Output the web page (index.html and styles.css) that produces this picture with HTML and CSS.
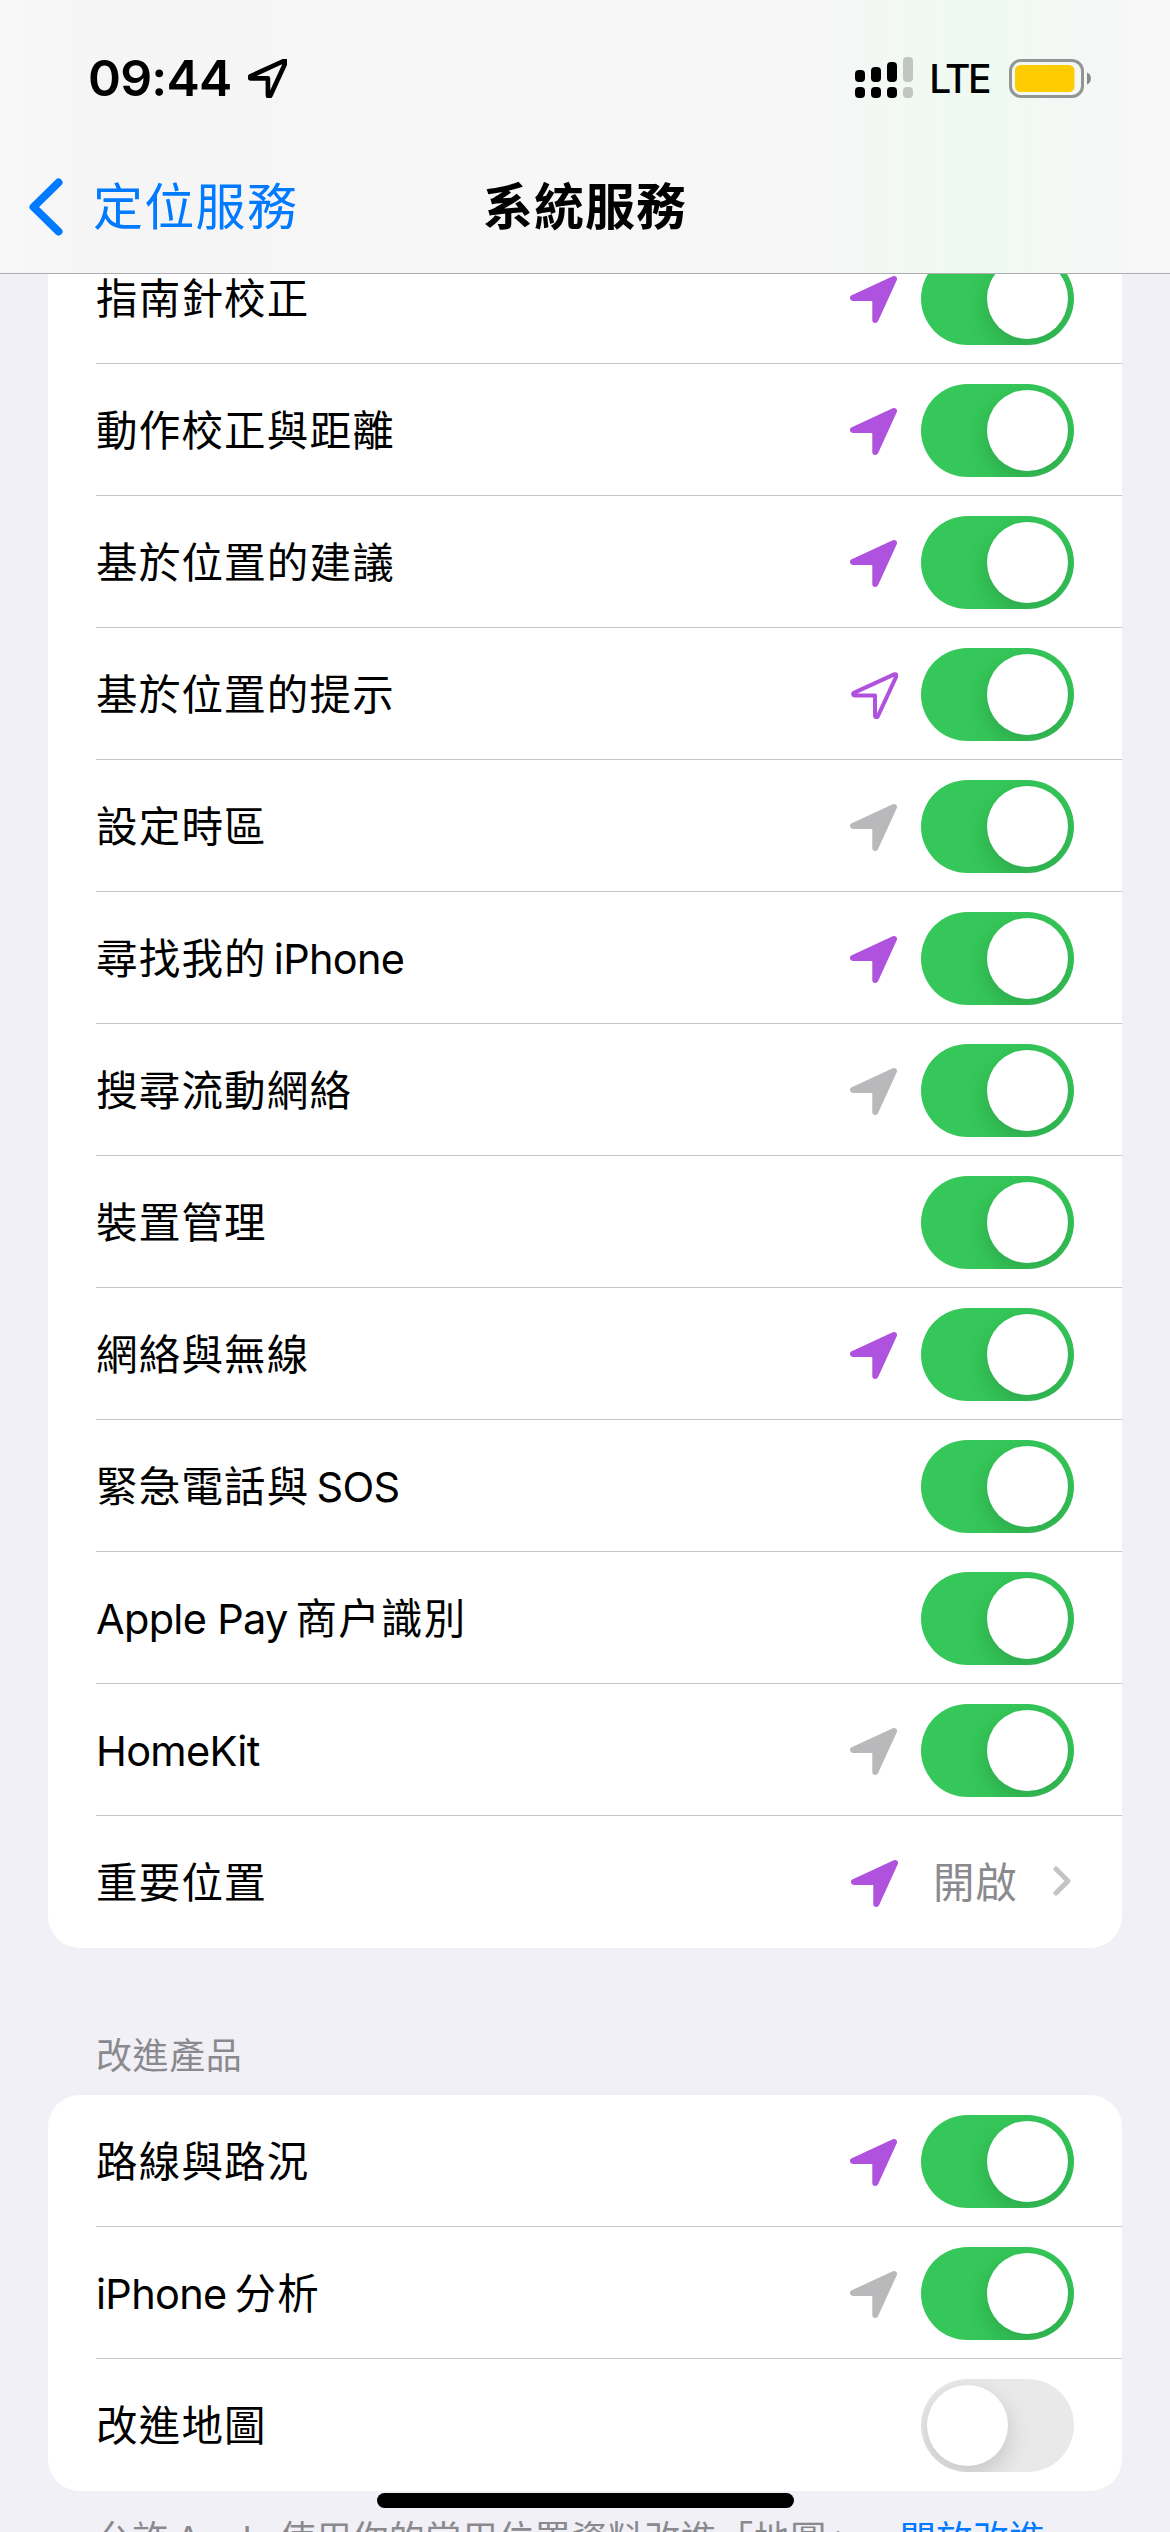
FILE: index.html
```
<!DOCTYPE html>
<html lang="zh-Hant-HK">
<head>
    <meta charset="UTF-8">
    <meta name="viewport" content="width=device-width, initial-scale=1.0">
    <title>系統服務</title>
    <link rel="stylesheet" href="styles.css">
</head>
<body>
    <!-- Shared icons -->
    <svg class="icon-defs" width="0" height="0">
        <symbol id="arrow-solid" viewBox="0 0 47 47">
            <path d="M44 3 3 22h22.3v22z" fill="currentColor" stroke="currentColor" stroke-width="6" stroke-linejoin="round" />
        </symbol>
        <symbol id="arrow-outline" viewBox="0 0 47 47">
            <path d="M43.2 2.4 3.3 20.6C1.5 21.6 2 23.4 4 23.4H24V43.5C24 45.6 26.2 45.8 27 44L45.2 4.6C46 2.8 45 1.7 43.2 2.4Z" fill="none" stroke="currentColor" stroke-linejoin="round" />
        </symbol>
    </svg>

    <header class="header">
        <div class="status-bar">
            <div class="status-left">
                <span class="time">09:44</span>
                <svg class="status-arrow"><use href="#arrow-outline" /></svg>
            </div>
            <div class="status-right">
                <svg class="signal" width="58" height="42" viewBox="0 0 58 42">
                    <rect x="0" y="13" width="10" height="12" rx="4" />
                    <rect x="16" y="10" width="10" height="15" rx="4" />
                    <rect x="32" y="5" width="10" height="20" rx="4" />
                    <rect class="dim" x="48" y="0" width="10" height="25" rx="4" />
                    <rect x="0" y="30" width="10" height="11" rx="4" />
                    <rect x="16" y="30" width="10" height="11" rx="4" />
                    <rect x="32" y="30" width="10" height="11" rx="4" />
                    <rect class="dim" x="48" y="30" width="10" height="11" rx="4" />
                </svg>
                <span class="network">LTE</span>
                <svg class="battery" width="82" height="39" viewBox="0 0 82 39">
                    <rect x="1.5" y="1.5" width="72" height="36" rx="10.5" fill="none" stroke="#919593" stroke-width="3" />
                    <rect x="6" y="6" width="59.5" height="27" rx="5.5" fill="#ffcc02" />
                    <path d="M78 13.5c5.200 1.500 5.200 10.500 0 12z" fill="#868a88" />
                </svg>
            </div>
        </div>
        <nav class="nav-bar">
            <a href="#" class="back">
                <svg width="34" height="58" viewBox="0 0 34 58">
                    <path d="M29.500 4.500 4.500 29l25 24.500" fill="none" stroke="currentColor" stroke-width="8" stroke-linecap="round" stroke-linejoin="round" />
                </svg>
                <span>定位服務</span>
            </a>
            <h1 class="nav-title">系統服務</h1>
        </nav>
    </header>

    <main class="content">
        <ul class="card card-scrolled">
            <li class="row">
                <span class="label">指南針校正</span>
                <svg class="arrow purple"><use href="#arrow-solid" /></svg>
                <span class="toggle on"></span>
            </li>
            <li class="row">
                <span class="label">動作校正與距離</span>
                <svg class="arrow purple"><use href="#arrow-solid" /></svg>
                <span class="toggle on"></span>
            </li>
            <li class="row">
                <span class="label">基於位置的建議</span>
                <svg class="arrow purple"><use href="#arrow-solid" /></svg>
                <span class="toggle on"></span>
            </li>
            <li class="row">
                <span class="label">基於位置的提示</span>
                <svg class="arrow arrow-hollow purple"><use href="#arrow-outline" /></svg>
                <span class="toggle on"></span>
            </li>
            <li class="row">
                <span class="label">設定時區</span>
                <svg class="arrow gray"><use href="#arrow-solid" /></svg>
                <span class="toggle on"></span>
            </li>
            <li class="row">
                <span class="label">尋找我的<span class="latin after">iPhone</span></span>
                <svg class="arrow purple"><use href="#arrow-solid" /></svg>
                <span class="toggle on"></span>
            </li>
            <li class="row">
                <span class="label">搜尋流動網絡</span>
                <svg class="arrow gray"><use href="#arrow-solid" /></svg>
                <span class="toggle on"></span>
            </li>
            <li class="row">
                <span class="label">裝置管理</span>
                <span class="toggle on"></span>
            </li>
            <li class="row">
                <span class="label">網絡與無線</span>
                <svg class="arrow purple"><use href="#arrow-solid" /></svg>
                <span class="toggle on"></span>
            </li>
            <li class="row">
                <span class="label">緊急電話與<span class="latin after">SOS</span></span>
                <span class="toggle on"></span>
            </li>
            <li class="row">
                <span class="label"><span class="latin before">Apple Pay</span>商户識別</span>
                <span class="toggle on"></span>
            </li>
            <li class="row">
                <span class="label"><span class="latin">HomeKit</span></span>
                <svg class="arrow gray"><use href="#arrow-solid" /></svg>
                <span class="toggle on"></span>
            </li>
            <li class="row">
                <span class="label">重要位置</span>
                <svg class="arrow purple"><use href="#arrow-solid" /></svg>
                <span class="detail">
                    <span class="value">開啟</span>
                    <svg class="chevron" width="18" height="30" viewBox="0 0 18 30">
                        <path d="M3 3l12 12L3 27" fill="none" stroke="currentColor" stroke-width="5" stroke-linecap="round" stroke-linejoin="round" />
                    </svg>
                </span>
            </li>
        </ul>

        <h2 class="section-title">改進產品</h2>
        <ul class="card">
            <li class="row">
                <span class="label">路線與路況</span>
                <svg class="arrow purple"><use href="#arrow-solid" /></svg>
                <span class="toggle on"></span>
            </li>
            <li class="row">
                <span class="label"><span class="latin before">iPhone</span>分析</span>
                <svg class="arrow gray"><use href="#arrow-solid" /></svg>
                <span class="toggle on"></span>
            </li>
            <li class="row">
                <span class="label">改進地圖</span>
                <span class="toggle"></span>
            </li>
        </ul>
        <p class="footnote">允許<span class="latin after before">Apple</span>使用你的常用位置資料改進「地圖」。<a href="#">開放改進</a></p>
    </main>

    <div class="home-indicator"></div>
</body>
</html>
```
FILE: styles.css
```
* {
    margin: 0;
    padding: 0;
    box-sizing: border-box;
}

body {
    width: 1170px;
    height: 2532px;
    display: flex;
    flex-direction: column;
    overflow: hidden;
    background: #f1f0f6;
    color: #000;
    font-family: Inter, 'Noto Sans CJK TC', sans-serif;
}

a {
    color: #007aff;
    text-decoration: none;
}

.icon-defs {
    position: absolute;
}

/* Header */
.header {
    flex: none;
    height: 274px;
    border-bottom: 1px solid #adadaf;
    background: linear-gradient(90deg, #f8f8f8 0, #f5f5f5 100px, #f7f7f7 500px, #f7f7f7 800px, #f2f8f3 900px, #eefaf1 980px, #f4f8f5 1060px, #f8f8f8 1170px);
}

.status-bar {
    display: flex;
    justify-content: space-between;
    align-items: center;
    height: 156px;
    padding: 0 79px 0 88px;
}

.status-left,
.status-right {
    display: flex;
    align-items: center;
}

.time {
    font-size: 50px;
    font-weight: 600;
    letter-spacing: -0.8px;
}

.status-arrow {
    width: 39px;
    height: 39px;
    margin-left: 16px;
    stroke-width: 5.6;
}

.signal .dim {
    fill: #c1c6c3;
}

.network {
    margin-left: 16px;
    font-size: 39px;
    font-weight: 500;
    letter-spacing: -2.5px;
}

.battery {
    margin-left: 20px;
}

.nav-bar {
    display: grid;
    grid-template-columns: 1fr auto 1fr;
    align-items: center;
    height: 102px;
    padding: 0 29px;
    line-height: 60px;
}

.back {
    display: flex;
    align-items: center;
    gap: 30px;
    font-size: 50px;
    letter-spacing: 1.3px;
}

.nav-title {
    font-size: 50px;
    font-weight: 700;
    letter-spacing: 1px;
}

/* List */
.content {
    flex: 1;
    padding: 0 48px;
    overflow: hidden;
}

.card {
    list-style: none;
    background: #fff;
    border-radius: 32px;
}

.card-scrolled {
    margin-top: -42px;
}

.row {
    display: flex;
    align-items: center;
    height: 132px;
    padding: 1px 48px 0 0;
    margin-left: 48px;
    border-bottom: 1px solid #c6c6c8;
}

.row:last-child {
    border-bottom-color: transparent;
}

.label {
    flex: 1;
    padding-top: 2px;
    font-size: 41.5px;
    line-height: 50px;
    letter-spacing: 1.2px;
}

.latin {
    letter-spacing: -0.7px;
}

.latin.after {
    margin-left: 7px;
}

.latin.before {
    margin-right: 8px;
}

.arrow {
    width: 47px;
    height: 47px;
    margin: 2px 24px 0 0;
}

.arrow-hollow {
    margin-right: 23px;
    stroke-width: 4;
}

.purple {
    color: #af52de;
}

.gray {
    color: #b9b9bb;
}

.toggle {
    width: 153px;
    height: 93px;
    padding: 6px;
    border-radius: 47px;
    background: #e9e9e9;
    overflow: hidden;
}

.toggle::before {
    content: '';
    display: block;
    width: 81px;
    height: 81px;
    border-radius: 50%;
    background: #fff;
    box-shadow: 0 9px 24px rgba(0, 0, 0, 0.16);
}

.toggle.on {
    background: #35c759;
}

.toggle.on::before {
    margin-left: auto;
}

.detail {
    display: flex;
    align-items: center;
    justify-content: space-between;
    width: 138px;
    margin: 0 3px 0 11px;
    color: #8a8a8e;
    font-size: 41.5px;
    line-height: 50px;
    letter-spacing: 0.8px;
}

.value {
    padding-top: 2px;
}

.chevron {
    margin-bottom: 2px;
    color: #c4c4c6;
}

.section-title {
    height: 147px;
    padding: 81px 0 0 48px;
    color: #8a8a8e;
    font-size: 36px;
    font-weight: 400;
    line-height: 54px;
    letter-spacing: 0.6px;
}

.footnote {
    padding: 23px 0 0 48px;
    color: #8a8a8e;
    font-size: 36px;
    line-height: 50px;
    letter-spacing: 0.5px;
    white-space: nowrap;
    text-spacing-trim: space-all;
}

.home-indicator {
    position: fixed;
    left: 377px;
    bottom: 24px;
    width: 417px;
    height: 15px;
    border-radius: 8px;
    background: #000;
}
```
